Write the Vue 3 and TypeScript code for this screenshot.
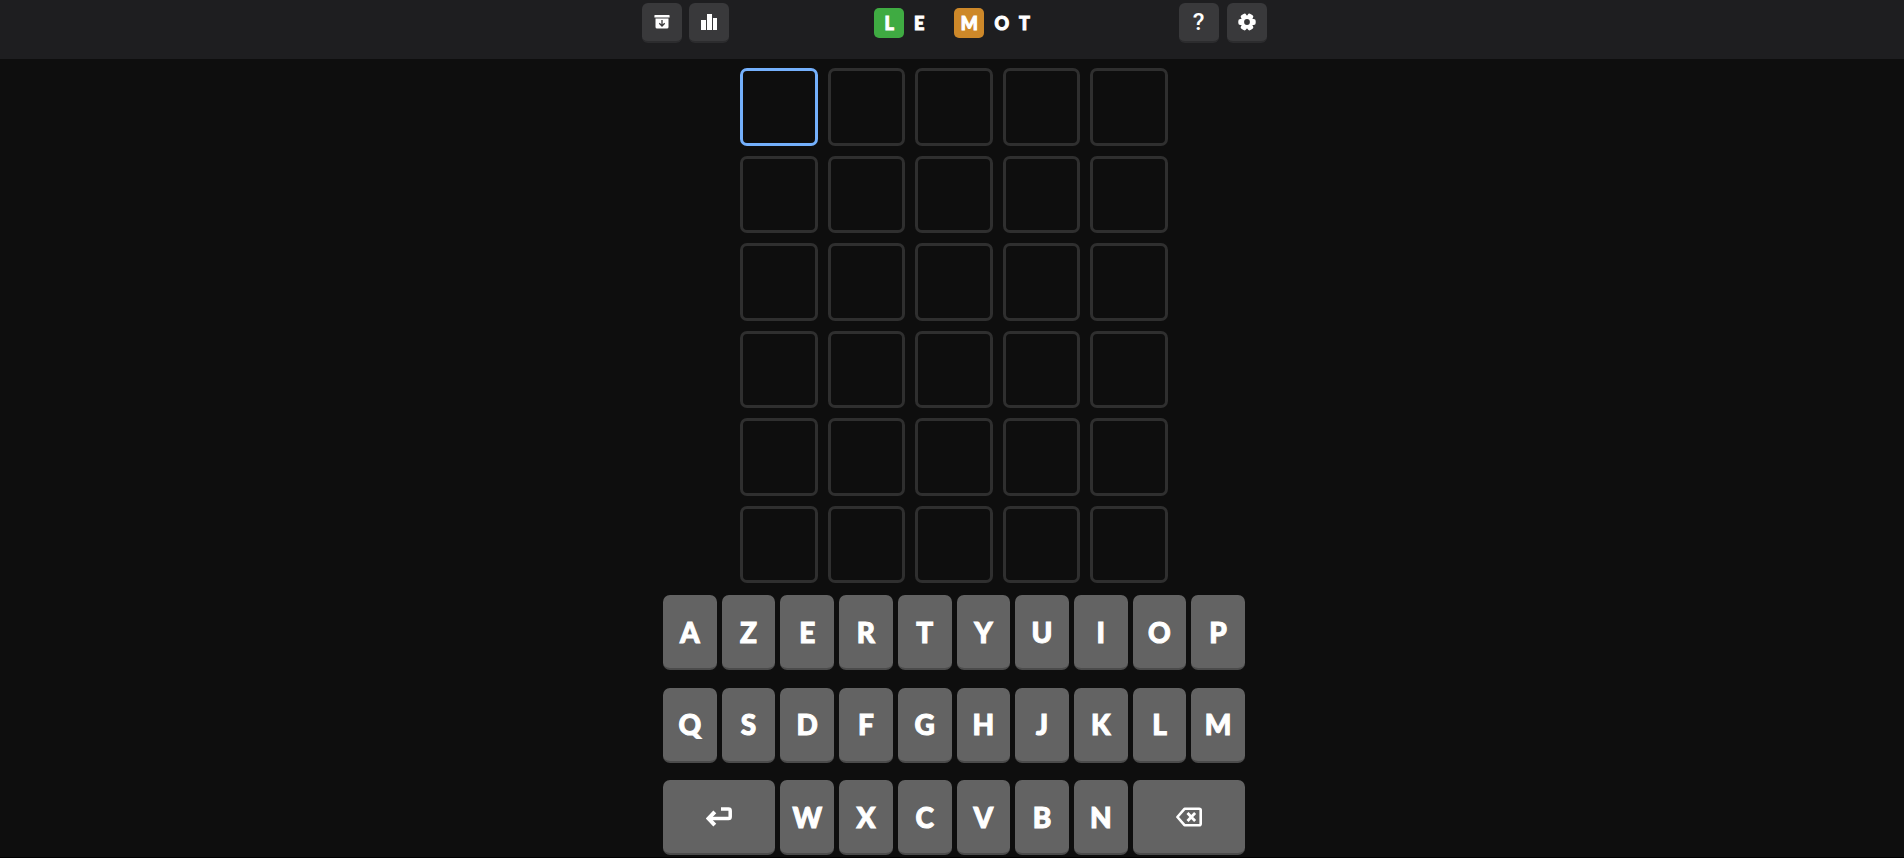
<script setup lang="ts">
import { ref } from 'vue'

interface TitleLetter {
  char: string
  state?: 'correct' | 'present'
}

const title: TitleLetter[] = [
  { char: 'L', state: 'correct' },
  { char: 'E' },
  { char: '' },
  { char: 'M', state: 'present' },
  { char: 'O' },
  { char: 'T' },
]

const rows = 6
const columns = 5
const guess = ref('')

const keyRows: string[][] = [
  [...'AZERTYUIOP'],
  [...'QSDFGHJKLM'],
  ['enter', ...'WXCVBN', 'delete'],
]

function press(key: string): void {
  if (key === 'enter') return
  if (key === 'delete') guess.value = guess.value.slice(0, -1)
  else if (guess.value.length < columns) guess.value += key
}
</script>

<template>
  <div class="page">
    <header class="header">
      <div class="bar">
        <nav class="group">
          <button class="tool" type="button" aria-label="Archives">
            <svg width="16" height="16" viewBox="0 0 16 16" aria-hidden="true">
              <path fill="#fff" d="M1 1h14a.6.6 0 0 1 .6.6v2H.4v-2A.6.6 0 0 1 1 1z" />
              <path fill="#fff" d="M1.500 4.600h13V13a1.600 1.600 0 0 1-1.600 1.600H3.100A1.600 1.600 0 0 1 1.500 13z" />
              <path d="M8 6v6M5.300 9.300 8 12l2.700-2.700" fill="none" stroke="#39393b" stroke-width="1.300" />
            </svg>
          </button>
          <button class="tool" type="button" aria-label="Statistiques">
            <svg width="16" height="16" viewBox="0 0 16 16" aria-hidden="true">
              <path fill="#fff" d="M0 6h5v10H0zM6 0h5v16H6zM12 4h4v12h-4z" />
            </svg>
          </button>
        </nav>
        <h1 class="title" aria-label="Le Mot">
          <span v-for="(letter, i) in title" :key="i" class="letter" :class="letter.state">{{ letter.char }}</span>
        </h1>
        <nav class="group end">
          <button class="tool help" type="button" aria-label="Aide">?</button>
          <button class="tool" type="button" aria-label="Paramètres">
            <svg width="18" height="18" viewBox="0 0 18 18" aria-hidden="true">
              <g fill="#fff">
                <circle cx="9" cy="9" r="6.400" />
                <rect v-for="a in [0, 60, 120]" :key="a" x="0.300" y="6" width="17.400" height="6" rx="2" :transform="`rotate(${a} 9 9)`" />
              </g>
              <circle cx="9" cy="9" r="2.900" fill="#39393b" />
            </svg>
          </button>
        </nav>
      </div>
    </header>
    <main class="game">
      <section class="board" aria-label="Grille">
        <template v-for="r in rows" :key="r">
          <div v-for="c in columns" :key="c" class="tile" :class="{ active: r === 1 && c === guess.length + 1 }">{{ r === 1 ? guess[c - 1] : '' }}</div>
        </template>
      </section>
      <section class="keyboard" aria-label="Clavier">
        <template v-for="(row, i) in keyRows" :key="i">
          <button
            v-for="key in row"
            :key="key"
            type="button"
            class="key"
            :class="{ wide: key.length > 1 }"
            :aria-label="key === 'enter' ? 'Entrée' : key === 'delete' ? 'Effacer' : key"
            @click="press(key)"
          >
            <svg v-if="key === 'enter'" width="26" height="20" viewBox="0 0 26 20" aria-hidden="true">
              <path d="M15 2h7.500q1.700 0 1.700 1.700v6q0 1.800-1.700 1.800H3" fill="none" stroke="#fff" stroke-width="3.500" />
              <path d="M8.800 4.800 2.600 11.500 8.800 18.200" fill="none" stroke="#fff" stroke-width="4" />
            </svg>
            <svg v-else-if="key === 'delete'" width="26" height="20" viewBox="0 0 26 20" aria-hidden="true">
              <path d="M8.500 1.800h14.700q1.500 0 1.500 1.500v13.400q0 1.500-1.500 1.500H8.500L1.400 10z" fill="none" stroke="#fff" stroke-width="2.600" stroke-linejoin="round" />
              <path d="M11.500 6l7.600 8M19.100 6l-7.600 8" fill="none" stroke="#fff" stroke-width="2.800" />
            </svg>
            <template v-else>{{ key }}</template>
          </button>
        </template>
      </section>
    </main>
  </div>
</template>

<style>
body {
  background: #000;
}
</style>

<style scoped>
.page {
  box-sizing: border-box;
  min-height: calc(100vh - 1px);
  background: #0e0e0e;
  color: #fff;
  font-family: 'Lato Black', Lato, 'Open Sans', sans-serif;
  font-weight: 900;
}
.header {
  box-sizing: border-box;
  height: 59px;
  padding: 3px 0 0 4px;
  background: #1e1e20;
}
.bar {
  display: grid;
  grid-template-columns: 1fr auto 1fr;
  align-items: center;
  max-width: 625px;
  margin: 0 auto;
}
.group {
  display: flex;
  gap: 7px;
}
.end {
  justify-content: flex-end;
  gap: 8px;
}
.tool {
  display: flex;
  align-items: center;
  justify-content: center;
  box-sizing: border-box;
  width: 40px;
  height: 40px;
  padding: 0;
  border: 0;
  border-bottom: 2px solid #2c2c2e;
  border-radius: 6px;
  background: #39393b;
  color: #fff;
  font: inherit;
  cursor: pointer;
}
.help {
  font-family: Roboto, sans-serif;
  font-size: 24px;
  font-weight: 500;
}
.title {
  display: flex;
  align-items: center;
  gap: 10px;
  margin: 0;
  padding-right: 4px;
  font-size: 18px;
  font-weight: 900;
  line-height: 30px;
  -webkit-text-stroke: 1px #fff;
}
.letter {
  min-width: 10px;
  text-align: center;
}
.correct,
.present {
  width: 30px;
  border-radius: 5px;
}
.correct {
  background: #3fab42;
}
.present {
  background: #cd8829;
}
.game {
  display: flex;
  flex-direction: column;
  align-items: center;
  gap: 12px;
  padding: 9px 0 2px 4px;
}
.board {
  display: grid;
  grid-template-columns: repeat(5, 1fr);
  grid-template-rows: repeat(6, 1fr);
  gap: 10px;
  width: 100%;
  max-width: 428px;
  height: 515px;
}
.tile {
  display: flex;
  align-items: center;
  justify-content: center;
  border: 3px solid #2f2f2f;
  border-radius: 7px;
  font-size: 36px;
}
.active {
  border-color: #74b0fc;
}
.keyboard {
  display: grid;
  grid-template-columns: repeat(10, 1fr);
  align-content: space-between;
  gap: 17px 5px;
  width: 100%;
  max-width: 582px;
  min-height: 260px;
}
.key {
  display: flex;
  align-items: center;
  justify-content: center;
  box-sizing: border-box;
  height: 75px;
  padding: 0;
  border: 0;
  border-bottom: 2px solid #4b4b4b;
  border-radius: 7px;
  background: #636363;
  color: #fff;
  font: inherit;
  font-size: 28px;
  -webkit-text-stroke: 1px #fff;
  cursor: pointer;
}
.wide {
  grid-column: span 2;
}
</style>
